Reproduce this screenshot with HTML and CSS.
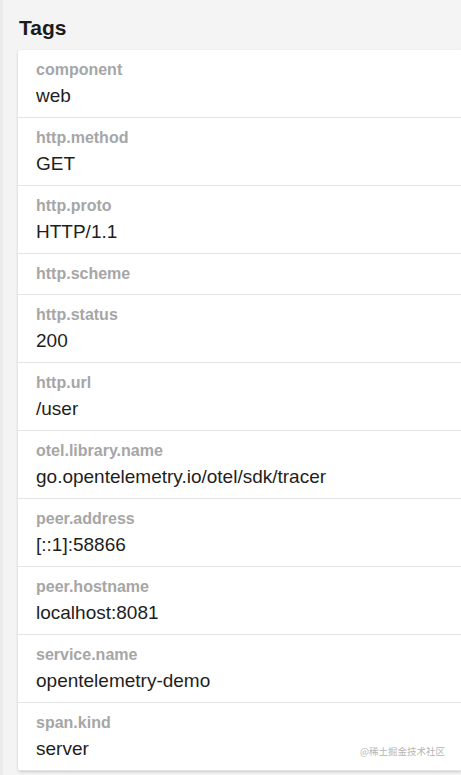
FILE: index.html
```html
<!DOCTYPE html>
<html>
<head>
<meta charset="utf-8">
<link rel="stylesheet" href="styles.css">
</head>
<body>
<div class="page">
  <h2 class="title">Tags</h2>
  <div class="card">
    <div class="row"><div class="key">component</div><div class="val">web</div></div>
    <div class="row"><div class="key">http.method</div><div class="val">GET</div></div>
    <div class="row"><div class="key">http.proto</div><div class="val">HTTP/1.1</div></div>
    <div class="row"><div class="key">http.scheme</div></div>
    <div class="row"><div class="key">http.status</div><div class="val">200</div></div>
    <div class="row"><div class="key">http.url</div><div class="val">/user</div></div>
    <div class="row"><div class="key">otel.library.name</div><div class="val">go.opentelemetry.io/otel/sdk/tracer</div></div>
    <div class="row"><div class="key">peer.address</div><div class="val">[::1]:58866</div></div>
    <div class="row"><div class="key">peer.hostname</div><div class="val">localhost:8081</div></div>
    <div class="row"><div class="key">service.name</div><div class="val">opentelemetry-demo</div></div>
    <div class="row"><div class="key">span.kind</div><div class="val">server</div></div>
    <div class="watermark">@稀土掘金技术社区</div>
  </div>
</div>
</body>
</html>
```
FILE: styles.css
```css
html, body {
  margin: 0;
  padding: 0;
}
body {
  background: #f4f4f4;
  border-left: 3px solid #ebebeb;
  height: 775px;
  overflow: hidden;
  font-family: "Liberation Sans", Arial, "Noto Sans CJK SC", sans-serif;
}
.page {
  padding: 14px 0 0 15px;
}
.title {
  margin: 0 0 9px 1px;
  font-size: 21px;
  line-height: 27px;
  font-weight: bold;
  color: #1c1c1c;
}
.card {
  position: relative;
  background: #fff;
  border-radius: 3px 0 0 3px;
  box-shadow: 0 1px 3px rgba(0,0,0,0.18);
}
.row {
  padding: 10px 18px 9px;
  border-bottom: 1px solid #e4e4e4;
}
.row:last-of-type {
  border-bottom: none;
}
.key {
  font-size: 16px;
  line-height: 19px;
  font-weight: bold;
  color: #a6a6a6;
}
.key:only-child {
  margin-bottom: 2px;
}
.val {
  margin-top: 4px;
  font-size: 19px;
  line-height: 25px;
  color: #1e1e1e;
}
.watermark {
  position: absolute;
  right: 16px;
  bottom: 13px;
  font-size: 9.5px;
  color: #b5b5b5;
  font-family: "Noto Sans CJK SC", sans-serif;
}
```
